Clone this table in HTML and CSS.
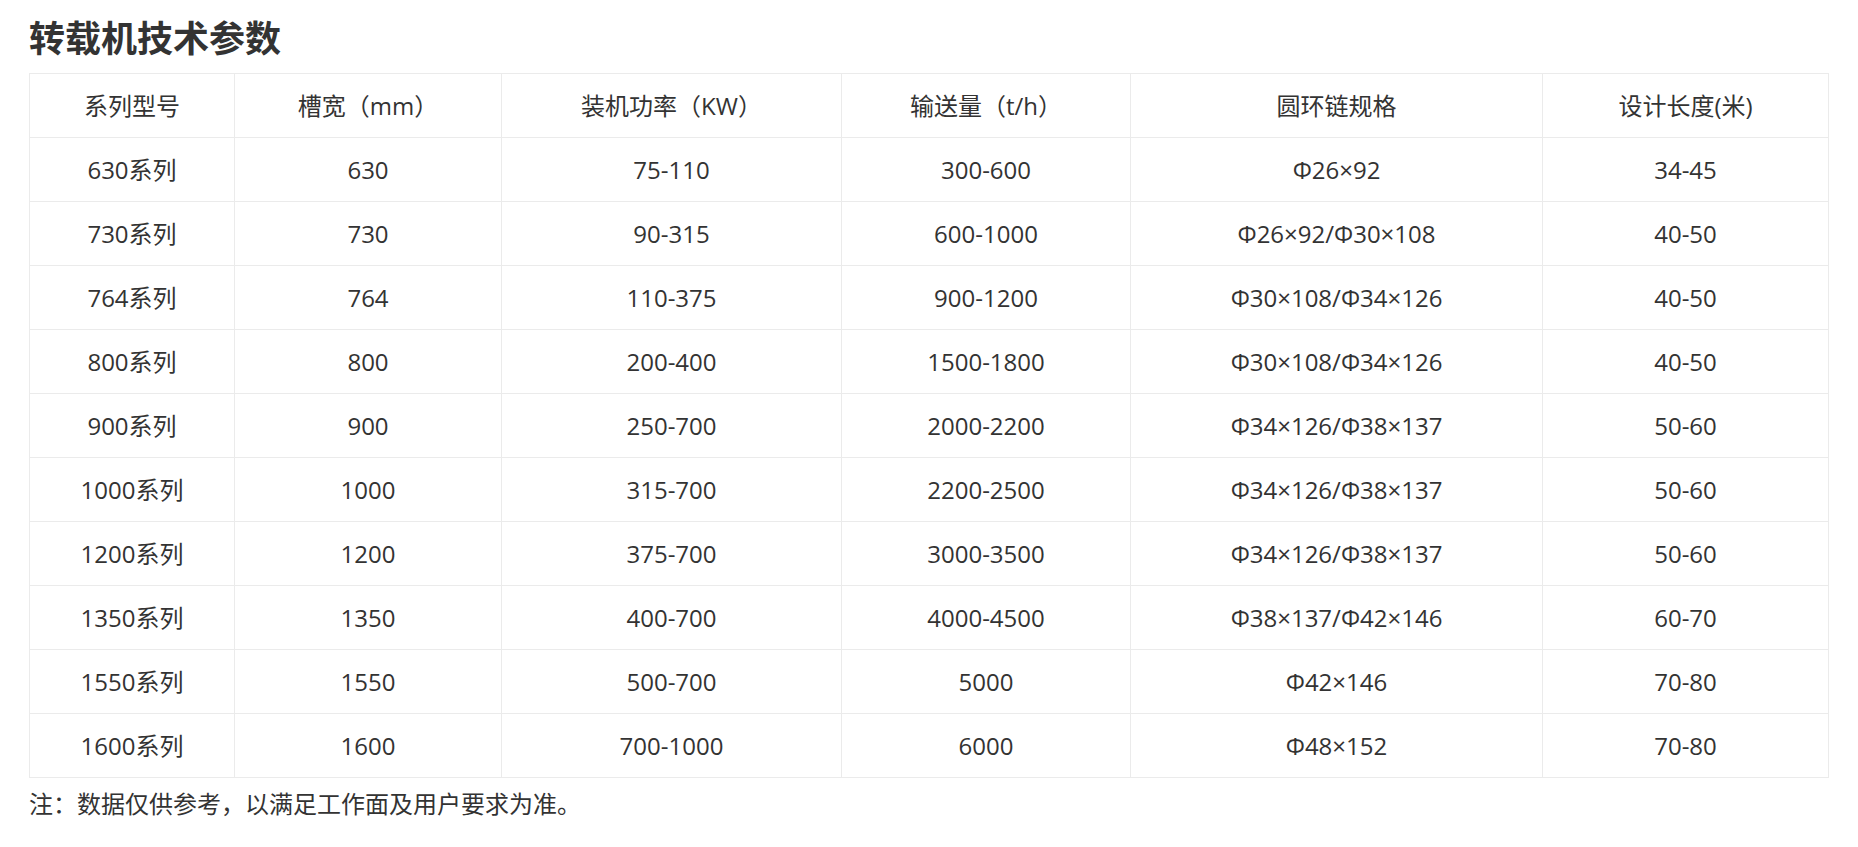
FILE: index.html
```html
<!DOCTYPE html>
<html lang="zh-CN">
<head>
<meta charset="utf-8">
<title>转载机技术参数</title>
<link rel="stylesheet" href="styles.css">
</head>
<body>
<div class="page">
  <h2 class="title">转载机技术参数</h2>
  <table class="spec">
    <colgroup>
      <col class="c1"><col class="c2"><col class="c3"><col class="c4"><col class="c5"><col class="c6">
    </colgroup>
    <tbody>
      <tr><td>系列型号</td><td>槽宽（mm）</td><td>装机功率（KW）</td><td>输送量（t/h）</td><td>圆环链规格</td><td>设计长度(米)</td></tr>
      <tr><td>630系列</td><td>630</td><td>75-110</td><td>300-600</td><td>Φ26×92</td><td>34-45</td></tr>
      <tr><td>730系列</td><td>730</td><td>90-315</td><td>600-1000</td><td>Φ26×92/Φ30×108</td><td>40-50</td></tr>
      <tr><td>764系列</td><td>764</td><td>110-375</td><td>900-1200</td><td>Φ30×108/Φ34×126</td><td>40-50</td></tr>
      <tr><td>800系列</td><td>800</td><td>200-400</td><td>1500-1800</td><td>Φ30×108/Φ34×126</td><td>40-50</td></tr>
      <tr><td>900系列</td><td>900</td><td>250-700</td><td>2000-2200</td><td>Φ34×126/Φ38×137</td><td>50-60</td></tr>
      <tr><td>1000系列</td><td>1000</td><td>315-700</td><td>2200-2500</td><td>Φ34×126/Φ38×137</td><td>50-60</td></tr>
      <tr><td>1200系列</td><td>1200</td><td>375-700</td><td>3000-3500</td><td>Φ34×126/Φ38×137</td><td>50-60</td></tr>
      <tr><td>1350系列</td><td>1350</td><td>400-700</td><td>4000-4500</td><td>Φ38×137/Φ42×146</td><td>60-70</td></tr>
      <tr><td>1550系列</td><td>1550</td><td>500-700</td><td>5000</td><td>Φ42×146</td><td>70-80</td></tr>
      <tr><td>1600系列</td><td>1600</td><td>700-1000</td><td>6000</td><td>Φ48×152</td><td>70-80</td></tr>
    </tbody>
  </table>
  <p class="note">注：数据仅供参考，以满足工作面及用户要求为准。</p>
</div>
</body>
</html>
```

FILE: styles.css
```css
html, body {
  margin: 0;
  padding: 0;
  background: #ffffff;
}

body {
  font-family: "Open Sans", "Noto Sans CJK SC", sans-serif;
  color: #333333;
}

.page {
  width: 1800px;
  margin: 0 auto;
  padding-top: 14px;
}

.title {
  margin: 0 0 9px 0;
  font-size: 36px;
  line-height: 50px;
  font-weight: 700;
  color: #333333;
}

.spec {
  width: 1800px;
  border-collapse: collapse;
  table-layout: fixed;
}

.spec td {
  height: 63px;
  padding: 0;
  border: 1px solid #ebebeb;
  text-align: center;
  vertical-align: middle;
  font-size: 24px;
  line-height: 30px;
  color: #333333;
}

.c1 { width: 205px; }
.c2 { width: 267px; }
.c3 { width: 340px; }
.c4 { width: 289px; }
.c5 { width: 412px; }
.c6 { width: 286px; }

.note {
  margin: 8px 0 0 0;
  font-size: 24px;
  line-height: 36px;
  color: #333333;
}
```
